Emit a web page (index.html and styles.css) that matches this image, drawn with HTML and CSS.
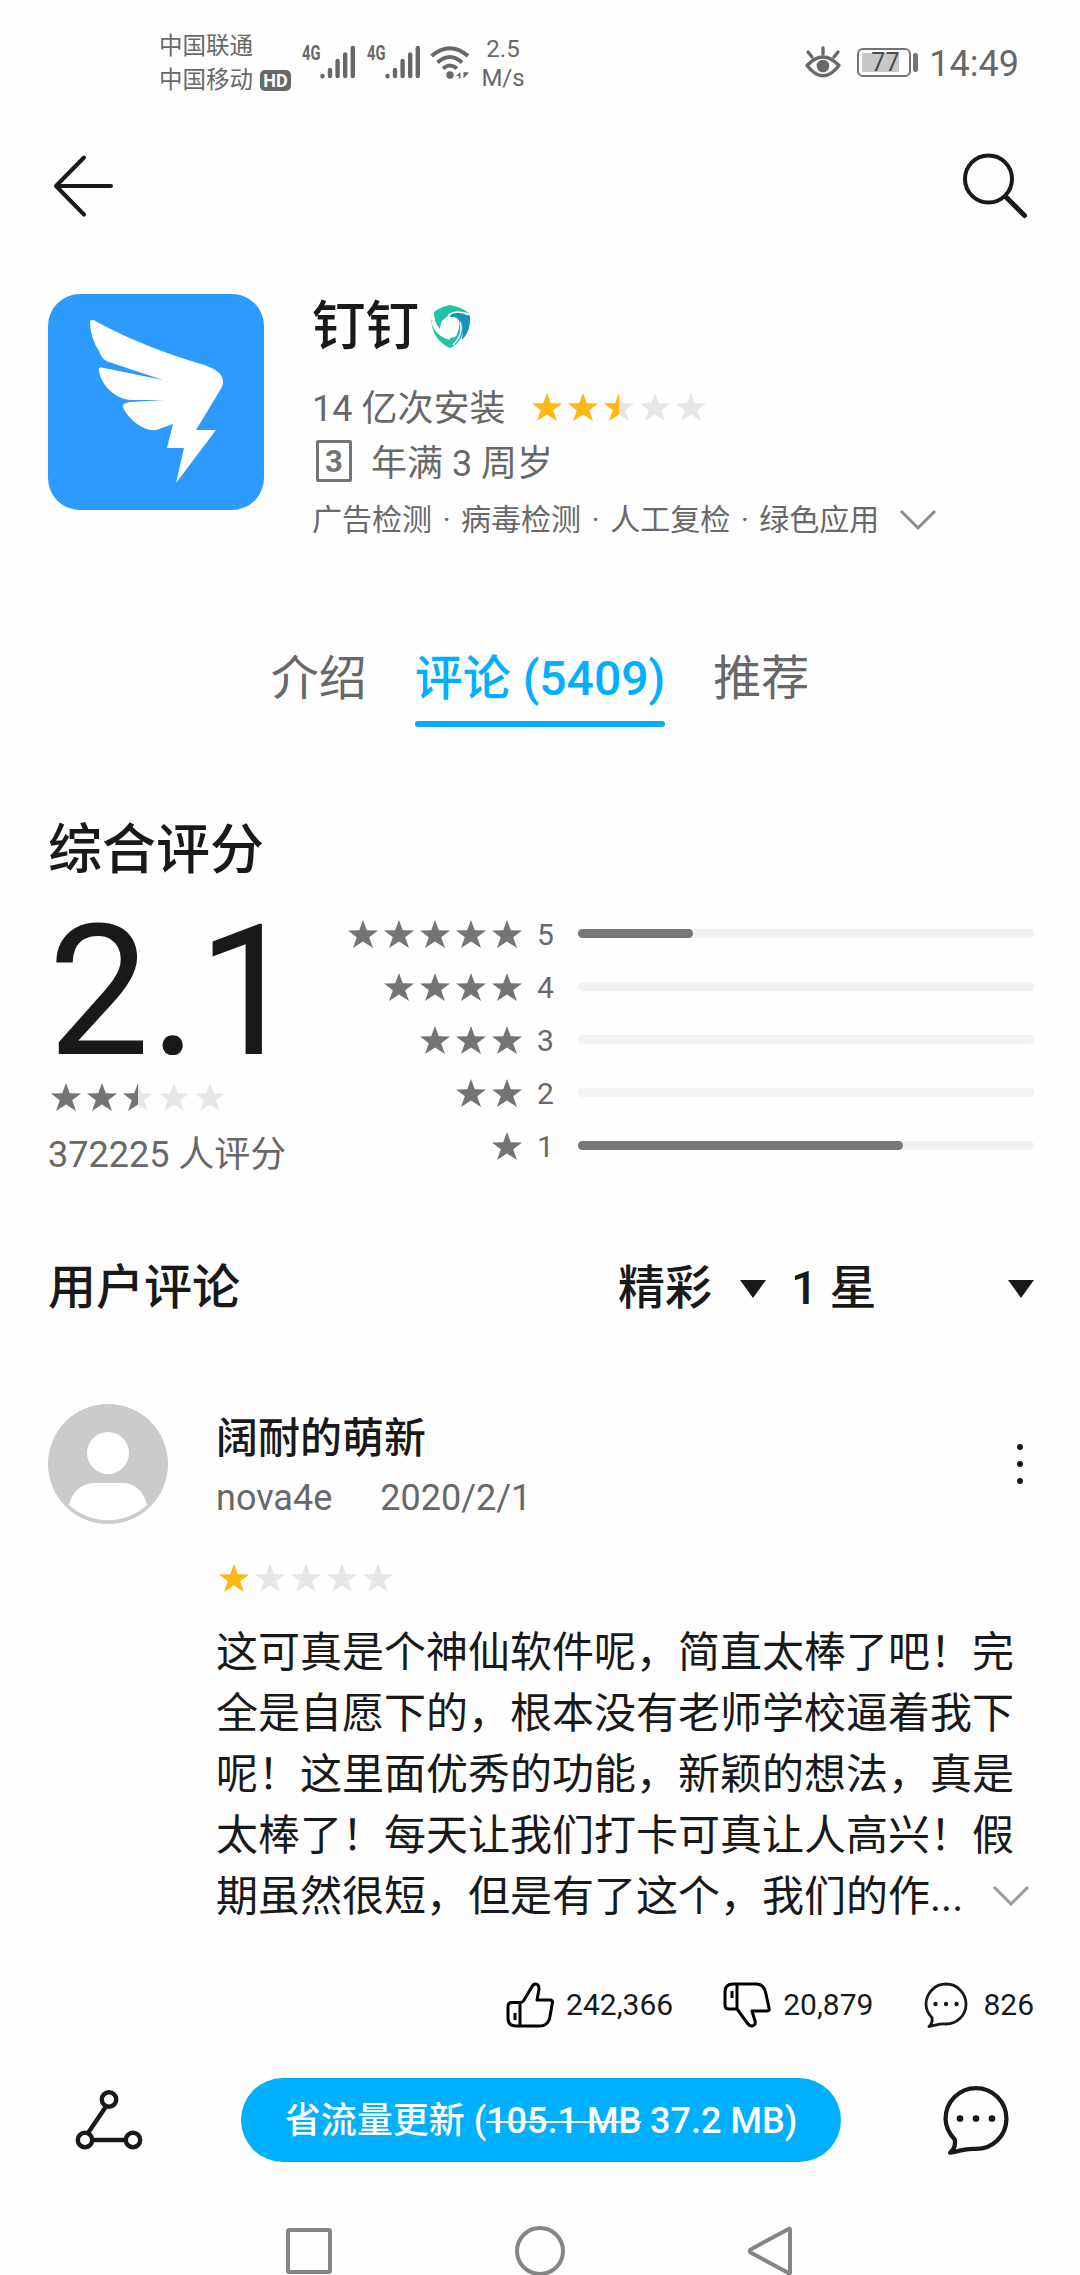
FILE: index.html
```html
<!DOCTYPE html>
<html lang="zh-CN">
<head>
<meta charset="utf-8">
<title>钉钉 - 评论</title>
<link rel="stylesheet" href="styles.css">
</head>
<body>
<svg class="defs" width="0" height="0" aria-hidden="true">
  <defs>
    <symbol id="star" viewBox="0 0 30 28"><path d="M15 0 18.8 10.3 30 10.5 21.2 17.2 25 28 15 21.6 5 28 8.8 17.2 0 10.5 11.2 10.3Z"/></symbol>
    <symbol id="star-left" viewBox="0 0 30 28"><path d="M15 0V21.6L5 28 8.8 17.2 0 10.5 11.2 10.3Z"/></symbol>
    <symbol id="signal" viewBox="0 0 36 34"><g fill="none" stroke="currentColor" stroke-width="4.4" stroke-linecap="round"><path d="M2.5 31V31.2M10 25V31M17.6 16V31M25.2 9.500V31M32.800 3V31"/></g></symbol>
    <symbol id="bubble" viewBox="0 0 44 46"><path d="M5 44.500C8 42 8.600 39 8 35.800C4.500 32 2 27.500 2 22.200C2 11 11 2 22 2S42 11 42 22.200S33 42 22 42C14.500 41.300 12 43.500 5 44.500Z" fill="none" stroke="currentColor" stroke-width="var(--line)" stroke-linejoin="round"/><circle cx="11.500" cy="22" r="2.200"/><circle cx="22" cy="22" r="2.200"/><circle cx="32.500" cy="22" r="2.200"/></symbol>
  </defs>
</svg>

<header class="status">
  <div class="carriers">
    <div>中国联通</div>
    <div class="carrier-row">中国移动<span class="hd">HD</span></div>
  </div>
  <div class="net"><span class="net-type">4G</span><svg class="signal" width="36" height="34"><use href="#signal"/></svg></div>
  <div class="net"><span class="net-type">4G</span><svg class="signal" width="36" height="34"><use href="#signal"/></svg></div>
  <svg class="wifi" width="40" height="34" viewBox="0 0 40 34"><g fill="none" stroke="currentColor" stroke-width="4"><path d="M1.500 11Q20-4.500 38 11"/><path d="M7.500 17.500Q20 6.500 32 17.500"/><path d="M13 23.500Q20 17.500 27 23.500"/></g><circle cx="20" cy="30" r="3.700"/><path d="M30.500 27V33.500H28.800V31H26ZM33.500 27V33.500L39 27.500Z"/></svg>
  <div class="speed"><div>2.5</div><div>M/s</div></div>
  <div class="status-right">
    <svg class="eye" width="36" height="33" viewBox="0 0 36 33"><path d="M2 19.500Q18 2.500 34 19.500Q18 40 2 19.500Z" fill="none" stroke="currentColor" stroke-width="3.400" stroke-linejoin="round"/><circle cx="18" cy="20" r="6.300"/><path d="M18 8V2M7 11 3 6M29 11 33 6" stroke="currentColor" stroke-width="3.400" stroke-linecap="round"/></svg>
    <div class="battery"><div class="battery-level">77</div></div>
    <div class="battery-tip"></div>
    <div class="clock">14:49</div>
  </div>
</header>

<nav class="appbar">
  <svg width="62" height="64" viewBox="0 0 62 64" fill="none" stroke="currentColor" stroke-width="4" stroke-linecap="round" stroke-linejoin="round"><path d="M31 3.500 3 32 31 60.500M4 32H58"/></svg>
  <svg width="66" height="66" viewBox="0 0 66 66" fill="none" stroke="currentColor" stroke-linecap="round"><circle cx="25.500" cy="26" r="23.500" stroke-width="4"/><path d="M43 44 61.500 62.500" stroke-width="5"/></svg>
</nav>

<section class="app">
  <svg class="app-icon" width="216" height="216" viewBox="0 0 216 216"><rect width="216" height="216" rx="32" fill="#2d9bfd"/><path fill="#fff" d="M42 27C44 25 47 26 49 28C82 46 119 60 153 70C166 74 179 80 174 93L148 136H168L128 189L136 154H119L125 130L108 136C94 138 78 122 75 113C74 110 78 109 82 108L116 106H83C67 105 53 91 51 77C50 73 53 73 56 74L115 86L61 68C55 66 53 62 51 57C45 48 42 37 42 27Z"/></svg>
  <div class="app-info">
    <h1 class="app-name">钉钉
      <svg width="40" height="44" viewBox="0 0 40 44"><path d="M3 7Q9 2 19 0Q30 2 38 8Q28 6 19 10Q9 14 9 24Q3 18 3 7Z" fill="#22c3a6"/><path d="M24 7Q32 6 39 11Q40 26 31 35Q33 21 27 14Q24 11 19 12Q20 8 24 7Z" fill="#1590b8"/><path d="M0 13Q3 29 17 33Q26 34 32 25Q30 38 19 43Q1 35 0 13Z" fill="#20c6a0"/><path d="M31 16Q35 25 28 36Q24 40 19 43Q24 37 26 29Q29 23 28 15Z" fill="#1aabc0"/><path d="M2 10Q4 26 17 31M1 17Q5 31 19 34M17 10Q27 4 37 10M29 17Q33 29 22 40" fill="none" stroke="#fff" stroke-width="1.400"/></svg>
    </h1>
    <div class="installs">14 亿次安装
      <span class="stars gold"><svg><use href="#star"/></svg><svg><use href="#star"/></svg><svg><use class="off" href="#star"/><use href="#star-left"/></svg><svg class="off"><use href="#star"/></svg><svg class="off"><use href="#star"/></svg></span>
    </div>
    <div class="age"><span class="age-box">3</span>年满 3 周岁</div>
    <div class="checks">广告检测 · 病毒检测 · 人工复检 · 绿色应用
      <svg width="38" height="22" viewBox="0 0 38 22" fill="none" stroke="#8a8a8a" stroke-width="3"><path d="M2 2 19 19 36 2"/></svg>
    </div>
  </div>
</section>

<div class="tabs">
  <span class="tab">介绍</span>
  <span class="tab active">评论 (5409)</span>
  <span class="tab">推荐</span>
</div>

<section class="rating">
  <h2 class="rating-title">综合评分</h2>
  <div class="rating-body">
    <div class="score-box">
      <div class="score">2.1</div>
      <div class="stars gray"><svg><use href="#star"/></svg><svg><use href="#star"/></svg><svg><use class="off" href="#star"/><use href="#star-left"/></svg><svg class="off"><use href="#star"/></svg><svg class="off"><use href="#star"/></svg></div>
      <div class="score-count">372225 人评分</div>
    </div>
    <div class="bars">
      <div class="bar-row"><span class="stars gray"><svg><use href="#star"/></svg><svg><use href="#star"/></svg><svg><use href="#star"/></svg><svg><use href="#star"/></svg><svg><use href="#star"/></svg></span><span class="bar-num">5</span><div class="track"><div class="fill" style="width:25.200%"></div></div></div>
      <div class="bar-row"><span class="stars gray"><svg><use href="#star"/></svg><svg><use href="#star"/></svg><svg><use href="#star"/></svg><svg><use href="#star"/></svg></span><span class="bar-num">4</span><div class="track"></div></div>
      <div class="bar-row"><span class="stars gray"><svg><use href="#star"/></svg><svg><use href="#star"/></svg><svg><use href="#star"/></svg></span><span class="bar-num">3</span><div class="track"></div></div>
      <div class="bar-row"><span class="stars gray"><svg><use href="#star"/></svg><svg><use href="#star"/></svg></span><span class="bar-num">2</span><div class="track"></div></div>
      <div class="bar-row"><span class="stars gray"><svg><use href="#star"/></svg></span><span class="bar-num">1</span><div class="track"><div class="fill" style="width:71.300%"></div></div></div>
    </div>
  </div>
</section>

<div class="filters">
  <h2 class="filter-title">用户评论</h2>
  <div class="select sort">精彩<i class="caret"></i></div>
  <div class="select level">1 星<i class="caret"></i></div>
</div>

<article class="review">
  <svg class="avatar" width="120" height="120" viewBox="0 0 120 120"><circle cx="60" cy="60" r="60" fill="#cbcbcb"/><circle cx="60" cy="49" r="21" fill="#fff"/><path d="M21 101C25 86 34 79 48 79H73C87 79 95 86 99 101A57.500 57.500 0 0 1 21 101Z" fill="#fff"/></svg>
  <div class="review-main">
    <div class="review-head">
      <div>
        <div class="user">阔耐的萌新</div>
        <div class="meta"><span>nova4e</span><span>2020/2/1</span></div>
      </div>
      <svg class="more" width="8" height="42" viewBox="0 0 8 42"><circle cx="4" cy="4" r="3"/><circle cx="4" cy="21" r="3"/><circle cx="4" cy="38" r="3"/></svg>
    </div>
    <div class="stars gold review-stars"><svg><use href="#star"/></svg><svg class="off"><use href="#star"/></svg><svg class="off"><use href="#star"/></svg><svg class="off"><use href="#star"/></svg><svg class="off"><use href="#star"/></svg></div>
    <div class="review-text">
      <p>这可真是个神仙软件呢，简直太棒了吧！完<br>全是自愿下的，根本没有老师学校逼着我下<br>呢！这里面优秀的功能，新颖的想法，真是<br>太棒了！每天让我们打卡可真让人高兴！假<br>期虽然很短，但是有了这个，我们的作...</p>
      <svg width="38" height="22" viewBox="0 0 38 22" fill="none" stroke="#9a9a9a" stroke-width="3"><path d="M2 2 19 19 36 2"/></svg>
    </div>
    <div class="actions">
      <span class="action up"><svg width="48" height="46" viewBox="0 0 48 46" fill="none" stroke="#000" stroke-width="3" stroke-linejoin="round"><path d="M14 20.500H6Q2 20.500 2 24.500V36Q2 44 10 44H34Q41 44 43.500 37L46.500 20Q46.500 18 44 18H31L33 7Q33 2 29.500 2Q27 2 25.500 5.500L18 18Q17 20.500 14 20.500ZM14 20.500V44"/><path d="M9 31V38"/></svg>242,366</span>
      <span class="action down"><svg width="48" height="46" viewBox="0 0 48 46" fill="none" stroke="#000" stroke-width="3" stroke-linejoin="round"><path d="M14 2H10Q2 2 2 10V23Q2 27 6 27H14L25 42Q26.500 44 29 44Q33 43 32 39L29 29H44Q47 29 46 26L42.500 10Q40.500 2 33 2ZM14 2V27"/><path d="M9 9V16"/></svg>20,879</span>
      <span class="action talk"><svg width="44" height="46"><use href="#bubble"/></svg>826</span>
    </div>
  </div>
</article>

<footer class="bottom">
  <svg width="68" height="60" viewBox="0 0 68 60" fill="none" stroke="currentColor" stroke-width="4.400"><circle cx="34" cy="9.500" r="7.200"/><circle cx="10" cy="50" r="7.200"/><circle cx="58" cy="50" r="7.200"/><path d="M31 16.500 13 43M17 50H51"/></svg>
  <div class="update">省流量更新 (<s>105.1 MB</s> 37.2 MB)</div>
  <svg class="chat" width="70" height="70"><use href="#bubble"/></svg>
</footer>

<nav class="sysnav">
  <svg width="46" height="46" viewBox="0 0 46 46"><rect x="2" y="2" width="42" height="42" rx="1.500"/></svg>
  <svg width="50" height="50" viewBox="0 0 50 50"><circle cx="25" cy="25" r="23"/></svg>
  <svg width="46" height="50" viewBox="0 0 46 50"><path d="M43 3.500V46.500Q43 48 41.500 47L3.500 26.500Q2 25 3.500 23.500L41.500 3Q43 2 43 3.500Z"/></svg>
</nav>
</body>
</html>
```
FILE: styles.css
```css
* { box-sizing: border-box; }

body {
  margin: 0;
  width: 1080px;
  height: 2275px;
  overflow: hidden;
  background: #fefefe;
  color: #191919;
  font-family: Roboto, "Noto Sans CJK SC", sans-serif;
  display: flex;
  flex-direction: column;
}
body > * { flex: none; }

h1, h2, p { margin: 0; font-weight: 500; }
svg { display: block; flex: none; fill: currentColor; overflow: visible; }
svg[fill="none"] { fill: none; }
.defs { position: absolute; }

/* status bar */
.status {
  height: 120px;
  padding: 29px 61px 0 159px;
  display: flex;
  align-items: flex-start;
  color: #686868;
  font-size: 23.500px;
  line-height: 34px;
  white-space: nowrap;
}
.carriers { width: 143px; }
.carrier-row { display: flex; align-items: center; }
.hd {
  margin-left: 7px;
  width: 31px;
  height: 21px;
  border-radius: 5px;
  background: #686868;
  color: #fefefe;
  font-size: 18px;
  font-weight: 700;
  line-height: 21px;
  text-align: center;
}
.net { width: 65px; display: flex; padding-top: 16px; }
.net-type { width: 18px; font-size: 21px; line-height: 17px; font-weight: 700; transform: scaleX(.7); transform-origin: 0 0; }
.wifi { margin: 16px 0 0 -2px; }
.speed { width: 48px; margin: 6px 0 0 9px; text-align: center; font-size: 24px; line-height: 29px; }
.status-right { margin-left: auto; display: flex; align-items: center; height: 66px; }
.battery {
  width: 54px;
  height: 29px;
  margin-left: 16px;
  padding: 3px;
  border: 2px solid #747474;
  border-radius: 6px;
}
.battery-level {
  width: 37px;
  height: 19px;
  background: #c8c8c8;
  font-size: 25px;
  line-height: 20px;
  padding-left: 9px;
  color: #4c4c4c;
}
.battery-tip { width: 5px; height: 19px; margin-left: 2px; border-radius: 3px; background: #747474; }
.clock { margin-left: 11px; font-size: 36px; padding-top: 3px; }

/* app bar */
.appbar {
  height: 132px;
  padding: 0 51px 0 53px;
  display: flex;
  align-items: center;
  justify-content: space-between;
}

/* app header */
.app { display: flex; height: 354px; padding: 42px 0 0 48px; color: #686868; }
.app-info { margin-left: 48px; }
.app-name { display: flex; align-items: center; gap: 12px; height: 66px; font-size: 53.500px; line-height: 66px; color: #191919; }
.installs { margin-top: 21px; display: flex; align-items: center; gap: 27px; height: 56px; font-size: 36px; line-height: 56px; }
.installs .stars { margin-top: -4px; }
.age { display: flex; align-items: center; height: 56px; margin-top: -1px; font-size: 36px; line-height: 56px; }
.age-box {
  width: 36px;
  height: 42px;
  margin: -6px 19px 0 4px;
  border: 3px solid #747474;
  border-radius: 2px;
  font-size: 31px;
  font-weight: 700;
  line-height: 37px;
  text-align: center;
  color: #747474;
}
.checks { display: flex; align-items: center; gap: 20px; height: 56px; font-size: 30px; line-height: 56px; word-spacing: 3.200px; }

.stars { display: flex; gap: 6px; }
.stars svg { width: 30px; height: 28px; }
.gold { color: #fdb813; }
.gray { color: #747474; }
.off { color: #e6e6e6; fill: #e6e6e6; }

/* tabs */
.tabs { display: flex; justify-content: center; gap: 48px; height: 121px; padding-top: 38px; font-size: 48px; line-height: 70px; color: #686868; }
.tab { height: 83px; }
.active { position: relative; color: #00b0ff; font-weight: 500; }
.active::after { content: ""; position: absolute; left: 0; right: 0; bottom: 0; height: 6px; border-radius: 3px; background: #0aabf7; }

/* rating summary */
.rating { padding: 88px 46px 0 48px; height: 465px; }
.rating-title { font-size: 54px; line-height: 72px; }
.rating-body { display: flex; margin-top: -3px; }
.score-box { width: 265px; }
.score { height: 199px; font-size: 181px; line-height: 216px; }
.score-box .stars { margin-left: 3px; }
.score-count { margin-top: 16px; font-size: 36px; line-height: 56px; color: #686868; white-space: nowrap; }
.bars { flex: 1; padding-top: 22px; }
.bar-row { height: 53px; display: grid; grid-template-columns: 209px 16px 1fr; align-items: center; }
.bar-row .stars { justify-content: flex-end; }
.bar-row .bar-num { margin-left: 15px; font-size: 30px; line-height: 53px; color: #686868; padding-top: 2px; }
.track { height: 9px; margin-left: 40px; border-radius: 5px; background: #f2f2f2; }
.fill { height: 9px; border-radius: 5px; background: #787878; }

/* filters */
.filters { height: 185px; padding: 61px 46px 0 48px; display: flex; align-items: flex-start; font-size: 47px; line-height: 70px; font-weight: 500; }
.filter-title { font-size: 48px; width: 570px; }
.select { height: 70px; display: flex; align-items: center; justify-content: space-between; }
.sort { width: 148px; }
.level { width: 243px; margin-left: 25px; }
.caret { border: solid transparent; border-width: 18px 13.500px 0; border-top-color: #191919; margin-top: 2px; }

/* review */
.review { height: 696px; padding: 27px 46px 0 48px; display: flex; gap: 48px; }
.review-main { flex: 1; }
.review-head { display: flex; justify-content: space-between; align-items: center; padding: 6px 10px 0 0; height: 120px; }
.more { margin-top: -6px; }
.user { font-size: 42px; line-height: 60px; font-weight: 500; }
.meta { display: flex; gap: 48px; font-size: 36px; line-height: 56px; color: #686868; padding-top: 1px; }
.review-stars { margin: 40px 0 0 3px; }
.review-text { margin-top: 30px; display: flex; align-items: flex-end; justify-content: space-between; font-size: 42px; line-height: 61px; height: 305px; }
.review-text p { font-weight: 400; white-space: nowrap; width: 798px; flex: none; }
.review-text svg { margin: 0 4px 20px -25px; }
.actions { display: flex; justify-content: flex-end; margin-top: 55px; font-size: 30px; line-height: 46px; }
.action { display: flex; align-items: center; gap: 12px; }
.down { margin-left: 50px; }
.talk { margin-left: 51px; gap: 15px; --line: 2.800px; }

/* bottom action bar */
.bottom { height: 84px; margin-top: 5px; padding: 0 69px 0 75px; display: flex; align-items: center; justify-content: space-between; }
.update {
  width: 600px;
  height: 84px;
  margin-left: -2px;
  border-radius: 42px;
  background: #00b0ff;
  color: #fff;
  font-size: 36px;
  font-weight: 500;
  line-height: 86px;
  text-align: center;
}
.update s { text-decoration-thickness: 2px; }
.chat { --line: 2.800px; }

/* system navigation */
.sysnav { display: flex; align-items: center; justify-content: space-between; height: 50px; margin-top: 64px; padding: 0 287px 0 286px; }
.sysnav svg { fill: none; stroke: #858585; stroke-width: 4; }
```
